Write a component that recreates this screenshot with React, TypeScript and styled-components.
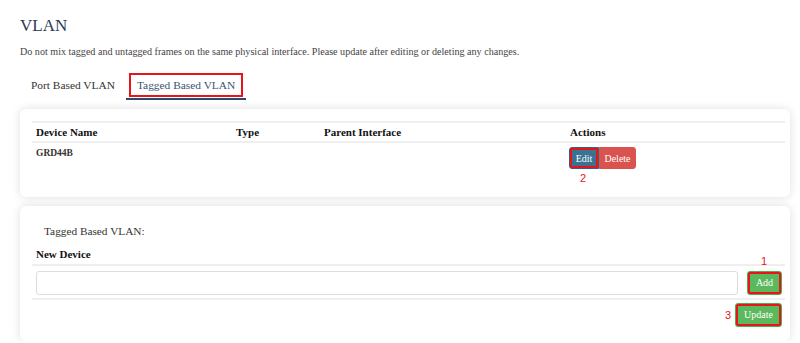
import React, { useState } from 'react';
import styled, { createGlobalStyle } from 'styled-components';

const GlobalStyle = createGlobalStyle`
  html, body {
    margin: 0;
    padding: 0;
    background: #ffffff;
  }
  body {
    font-family: "Liberation Serif", "Times New Roman", serif;
    color: #333;
  }
`;

const devices = [{ name: 'GRD44B', type: '', parent: '' }];

const App: React.FC = () => {
  const [tab, setTab] = useState(1);
  const [newDevice, setNewDevice] = useState('');

  return (
    <>
      <GlobalStyle />
      <Page>
        <Title>VLAN</Title>
        <Note>
          Do not mix tagged and untagged frames on the same physical interface. Please update after editing or deleting any changes.
        </Note>
        <Tabs>
          <Tab active={tab === 0} onClick={() => setTab(0)}>
            <TabLabel>Port Based VLAN</TabLabel>
          </Tab>
          <Tab active={tab === 1} onClick={() => setTab(1)}>
            <TabLabel marked>Tagged Based VLAN</TabLabel>
          </Tab>
        </Tabs>

        <Card>
          <HeadRow>
            <HeadCell>Device Name</HeadCell>
            <HeadCell>Type</HeadCell>
            <HeadCell>Parent Interface</HeadCell>
            <HeadCell>Actions</HeadCell>
          </HeadRow>
          {devices.map((d) => (
            <BodyRow key={d.name}>
              <NameCell>{d.name}</NameCell>
              <BodyCell>{d.type}</BodyCell>
              <BodyCell>{d.parent}</BodyCell>
              <ActionCell>
                <BtnGroup>
                  <Btn kind="edit" marked>Edit</Btn>
                  <Btn kind="delete">Delete</Btn>
                  <StepBelow>2</StepBelow>
                </BtnGroup>
              </ActionCell>
            </BodyRow>
          ))}
        </Card>

        <Card bottom>
          <SubTitle>Tagged Based VLAN:</SubTitle>
          <FieldLabel>New Device</FieldLabel>
          <InputRow>
            <TextInput value={newDevice} onChange={(e) => setNewDevice(e.target.value)} />
            <BtnWrap>
              <Btn kind="add" marked solo>Add</Btn>
              <StepAbove>1</StepAbove>
            </BtnWrap>
          </InputRow>
          <UpdateRow>
            <BtnWrap>
              <StepLeft>3</StepLeft>
              <Btn kind="add" marked solo big>Update</Btn>
            </BtnWrap>
          </UpdateRow>
        </Card>
      </Page>
    </>
  );
};

export default App;

const Page = styled.div`
  padding: 15px 10px 0 20px;
  display: flex;
  flex-direction: column;
`;

const Title = styled.h1`
  margin: 0;
  font-size: 17px;
  line-height: 22px;
  font-weight: 400;
  color: #2b3a55;
`;

const Note = styled.p`
  margin: 8px 0 0;
  font-size: 10.1px;
  line-height: 13px;
  color: #444;
`;

const Tabs = styled.div`
  display: flex;
  margin-top: 15px;
`;

const Tab = styled.div<{ active?: boolean }>`
  padding: 0 3px 1px;
  border-bottom: 2px solid ${(p) => (p.active ? '#2c4a6e' : 'transparent')};
  color: ${(p) => (p.active ? '#3a5672' : '#333')};
  cursor: pointer;
`;

const TabLabel = styled.span<{ marked?: boolean }>`
  display: block;
  padding: 5px 8px;
  font-size: 11.4px;
  line-height: 14px;
  outline: ${(p) => (p.marked ? '2px solid #e8141b' : 'none')};
  outline-offset: -2px;
`;

const Card = styled.div<{ bottom?: boolean }>`
  margin-top: 9px;
  background: #fff;
  border-radius: 6px;
  box-shadow: 0 0 10px rgba(0, 0, 0, 0.13);
  padding: ${(p) => (p.bottom ? '18px 5px 14px 12px' : '12px 5px 28px 12px')};
`;

const HeadRow = styled.div`
  display: grid;
  grid-template-columns: 200px 88px 246px 1fr;
  border-top: 2px solid #efefef;
  border-bottom: 2px solid #efefef;
  height: 18px;
  align-items: center;
`;

const HeadCell = styled.div`
  padding: 0 4px;
  font-size: 11px;
  font-weight: 700;
  color: #111;
`;

const BodyRow = styled.div`
  display: grid;
  grid-template-columns: 200px 88px 246px 1fr;
  align-items: start;
`;

const BodyCell = styled.div`
  padding: 4px;
  font-size: 10px;
`;

const NameCell = styled(BodyCell)`
  padding-top: 5px;
  font-size: 9.5px;
  font-weight: 700;
  color: #333;
`;

const ActionCell = styled.div`
  padding: 4px 0 0 3px;
`;

const BtnGroup = styled.div`
  position: relative;
  display: inline-flex;
`;

const palette = {
  edit: { bg: '#3a7291', border: '#2f6581' },
  delete: { bg: '#d9534f', border: '#d9534f' },
  add: { bg: '#5cb85c', border: '#4cae4c' },
};

const Btn = styled.button<{ kind: 'edit' | 'delete' | 'add'; marked?: boolean; solo?: boolean; big?: boolean }>`
  height: ${(p) => (p.solo ? '23.5px' : '22px')};
  padding: 0 ${(p) => (p.kind === 'add' ? '6px' : '4px')};
  width: ${(p) => (p.kind === 'edit' ? '30px' : p.kind === 'delete' ? '37px' : p.big ? '47px' : '35px')};
  font-family: "Liberation Serif", "Times New Roman", serif;
  font-size: 10px;
  color: #fff;
  background: ${(p) => palette[p.kind].bg};
  border: 1px solid ${(p) => palette[p.kind].border};
  border-radius: ${(p) => (p.solo ? '3px' : p.kind === 'edit' ? '3px 0 0 3px' : '0 3px 3px 0')};
  outline: ${(p) => (p.marked ? '2px solid #e8141b' : 'none')};
  outline-offset: -3px;
  cursor: pointer;
`;

const Step = styled.span`
  position: absolute;
  font-family: "Liberation Sans", Arial, sans-serif;
  font-size: 11px;
  line-height: 12px;
  color: #e8141b;
`;

const StepBelow = styled(Step)`
  left: 11px;
  top: 25px;
`;

const StepAbove = styled(Step)`
  left: 14px;
  top: -16px;
`;

const StepLeft = styled(Step)`
  left: -10px;
  top: 6px;
`;

const SubTitle = styled.div`
  padding-left: 12px;
  font-size: 11.3px;
  line-height: 14px;
  color: #333;
`;

const FieldLabel = styled.div`
  margin-top: 9px;
  padding: 0 4px 3px;
  font-size: 11px;
  line-height: 14px;
  font-weight: 700;
  color: #111;
  border-bottom: 2px solid #efefef;
`;

const InputRow = styled.div`
  display: flex;
  align-items: flex-start;
  gap: 9px;
  padding: 5px 3px 3px 4px;
  border-bottom: 2px solid #efefef;
`;

const TextInput = styled.input`
  flex: 1;
  height: 24px;
  box-sizing: border-box;
  border: 1px solid #dcdcdc;
  border-radius: 3px;
  font-family: "Liberation Serif", serif;
  font-size: 11px;
  padding: 0 6px;
`;

const BtnWrap = styled.div`
  position: relative;
  display: inline-flex;
`;

const UpdateRow = styled.div`
  display: flex;
  justify-content: flex-end;
  padding: 3px 3px 0 0;
`;
